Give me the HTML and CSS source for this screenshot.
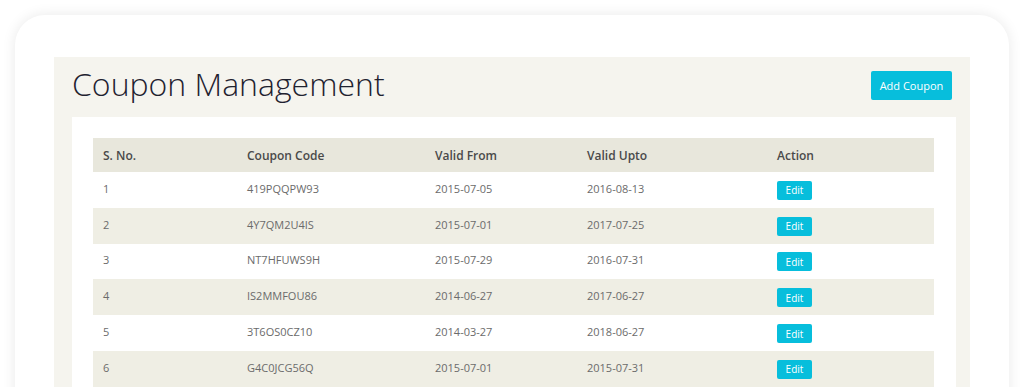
FILE: index.html
```html
<!DOCTYPE html>
<html lang="en">
<head>
  <meta charset="UTF-8">
  <title>Coupon Management</title>
  <link rel="stylesheet" href="styles.css">
</head>
<body>
  <div class="frame">
    <div class="panel">
      <div class="panel-head">
        <h1>Coupon Management</h1>
        <button class="btn-add">Add Coupon</button>
      </div>
      <div class="card">
        <table class="coupons">
          <colgroup>
            <col class="c1"><col class="c2"><col class="c3"><col class="c4"><col class="c5">
          </colgroup>
          <thead>
            <tr>
              <th>S. No.</th>
              <th>Coupon Code</th>
              <th>Valid From</th>
              <th>Valid Upto</th>
              <th>Action</th>
            </tr>
          </thead>
          <tbody>
            <tr><td>1</td><td>419PQQPW93</td><td>2015-07-05</td><td>2016-08-13</td><td><button class="btn-edit">Edit</button></td></tr>
            <tr><td>2</td><td>4Y7QM2U4IS</td><td>2015-07-01</td><td>2017-07-25</td><td><button class="btn-edit">Edit</button></td></tr>
            <tr><td>3</td><td>NT7HFUWS9H</td><td>2015-07-29</td><td>2016-07-31</td><td><button class="btn-edit">Edit</button></td></tr>
            <tr><td>4</td><td>IS2MMFOU86</td><td>2014-06-27</td><td>2017-06-27</td><td><button class="btn-edit">Edit</button></td></tr>
            <tr><td>5</td><td>3T6OS0CZ10</td><td>2014-03-27</td><td>2018-06-27</td><td><button class="btn-edit">Edit</button></td></tr>
            <tr><td>6</td><td>G4C0JCG56Q</td><td>2015-07-01</td><td>2015-07-31</td><td><button class="btn-edit">Edit</button></td></tr>
          </tbody>
        </table>
      </div>
    </div>
  </div>
</body>
</html>
```

FILE: styles.css
```css
body {
  margin: 0;
  padding: 15px 15px 0 15px;
  background-color: #ffffff;
  font-family: "Open Sans", "Liberation Sans", sans-serif;
  overflow: hidden;
}

.frame {
  background-color: #ffffff;
  border-radius: 30px;
  box-shadow: 0 0 14px rgba(0, 0, 0, 0.09);
  padding: 42px 39px 0 39px;
  height: 600px;
}

.panel {
  background-color: #f5f4ee;
  padding: 0 14px 40px 18px;
}

.panel-head {
  display: flex;
  justify-content: space-between;
  align-items: flex-start;
  height: 60px;
  padding-right: 4px;
}

h1 {
  margin: 0;
  margin-top: 7px;
  font-size: 32px;
  font-weight: 300;
  color: #1f2230;
  line-height: 40px;
}

.btn-add {
  margin-top: 14px;
  width: 81px;
  height: 29px;
  padding: 0;
  border: none;
  border-radius: 2px;
  background-color: #07bedc;
  color: #ffffff;
  font-family: "Open Sans", "Liberation Sans", sans-serif;
  font-size: 11px;
}

.card {
  background-color: #ffffff;
  padding: 21px 22px 40px 21px;
}

.coupons {
  width: 100%;
  border-collapse: collapse;
  table-layout: fixed;
  font-size: 11px;
  color: #6b6b6b;
}

.c1 { width: 144px; }
.c2 { width: 188px; }
.c3 { width: 152px; }
.c4 { width: 190px; }

.coupons th {
  background-color: #e8e7dc;
  color: #4a4a4a;
  font-weight: 600;
  text-align: left;
  height: 34px;
  padding: 0 10px;
  font-size: 12px;
}

.coupons td {
  height: 32.8px;
  padding: 0 10px 3px 10px;
  line-height: 15px;
}

.coupons tbody tr:nth-child(even) td {
  background-color: #efeee4;
}

.btn-edit {
  width: 35px;
  height: 19px;
  margin-top: 4px;
  padding: 0;
  border: none;
  border-radius: 2px;
  background-color: #07bedc;
  color: #ffffff;
  font-family: "Open Sans", "Liberation Sans", sans-serif;
  font-size: 10px;
  vertical-align: middle;
}
```
